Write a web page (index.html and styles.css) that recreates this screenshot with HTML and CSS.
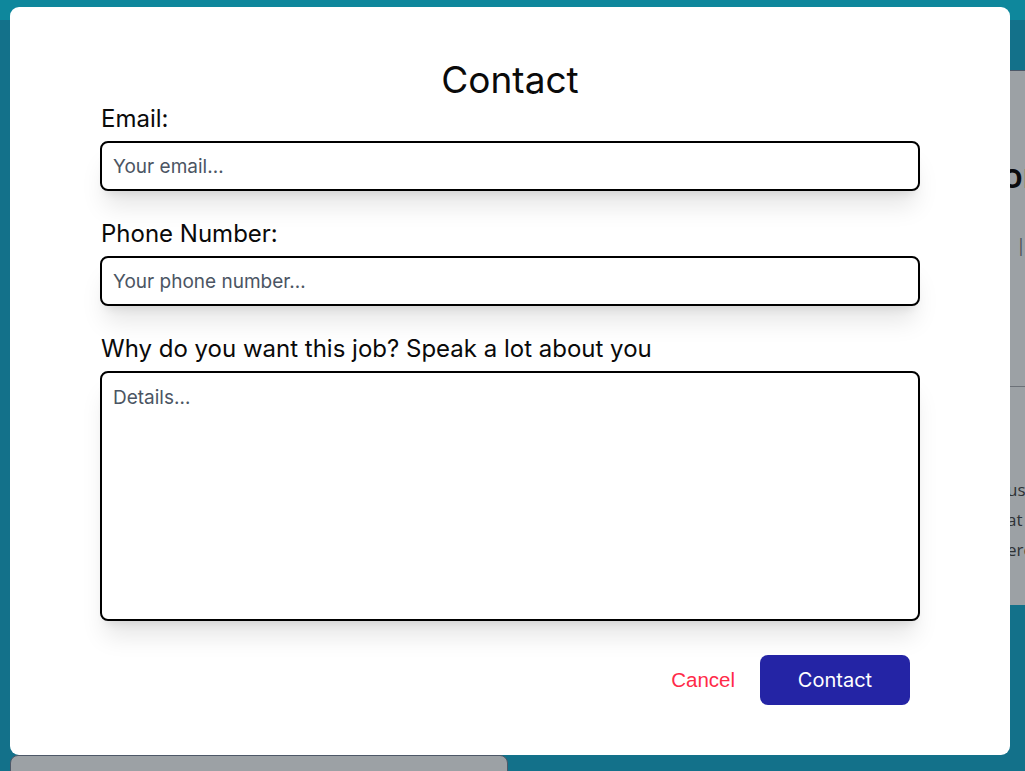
FILE: index.html
```html
<!DOCTYPE html>
<html lang="en">
<head>
<meta charset="utf-8">
<title>Contact</title>
<link rel="stylesheet" href="styles.css">
</head>
<body>
<div class="page">
  <div class="topbar"></div>
  <div class="row-right">
    <div class="job-card">
      <div class="job-title">OR</div>
      <div class="job-meta">|</div>
      <hr class="job-rule">
      <div class="job-text">
        <p>us</p>
        <p>at</p>
        <p>erc</p>
      </div>
    </div>
  </div>
  <div class="row-left">
    <div class="small-card"></div>
  </div>
</div>

<div class="overlay">
  <form class="modal">
    <h1 class="modal-title">Contact</h1>
    <div class="form-body">
      <label class="field-label" for="email">Email:</label>
      <input class="field-input" id="email" type="text" placeholder="Your email…">

      <label class="field-label" for="phone">Phone Number:</label>
      <input class="field-input" id="phone" type="text" placeholder="Your phone number…">

      <label class="field-label" for="details">Why do you want this job? Speak a lot about you</label>
      <textarea class="field-input field-area" id="details" placeholder="Details…"></textarea>

      <div class="actions">
        <button type="button" class="btn-cancel">Cancel</button>
        <button type="button" class="btn-primary">Contact</button>
      </div>
    </div>
  </form>
</div>
</body>
</html>
```

FILE: styles.css
```css
* { box-sizing: border-box; }

html, body {
  margin: 0;
  padding: 0;
  height: 100%;
  overflow: hidden;
}

body {
  background: #13718a;
  font-family: Inter, "Noto Sans", sans-serif;
}

/* background page */
.page {
  display: flex;
  flex-direction: column;
  width: 1025px;
}

.topbar {
  height: 20px;
  background: #0e879c;
}

.row-right {
  display: flex;
  padding-top: 50px;
  padding-left: 1010px;
}

.job-card {
  width: 400px;
  height: 535px;
  background: #9ca1a5;
  border-top: 1px solid #4d5868;
  overflow: hidden;
  font-family: "Open Sans", "Noto Sans", sans-serif;
}

.job-title {
  margin-top: 92px;
  margin-left: -8px;
  font-size: 26px;
  font-weight: 700;
  color: #0b0c0e;
  line-height: 30px;
}

.job-meta {
  margin-top: 40px;
  margin-left: 6px;
  font-size: 18px;
  color: #4a4f55;
  line-height: 24px;
}

.job-rule {
  margin: 129px 0 0 0;
  border: 0;
  border-top: 1px solid #6c7178;
}

.job-text {
  margin-top: 88px;
  font-size: 17px;
  color: #2e3236;
  line-height: 30px;
}

.job-text p {
  margin: 0;
  margin-left: -3px;
}

.row-left {
  display: flex;
  padding-top: 150px;
  padding-left: 10px;
}

.small-card {
  width: 498px;
  height: 40px;
  background: #9ca1a5;
  border: 1px solid #4d5868;
  border-radius: 8px;
}

/* modal */
.overlay {
  position: fixed;
  inset: 0;
  display: flex;
  justify-content: flex-start;
  align-items: flex-start;
  padding-top: 7px;
  padding-left: 10px;
}

.modal {
  width: 1000px;
  height: 748px;
  background: #ffffff;
  border-radius: 9px;
  padding: 53px 90px 0;
  display: flex;
  flex-direction: column;
}

.modal-title {
  margin: 0;
  text-align: center;
  font-size: 37px;
  line-height: 40px;
  font-weight: 400;
  color: #0a0a0a;
}

.form-body {
  display: flex;
  flex-direction: column;
}

.field-label {
  font-size: 24px;
  line-height: 28px;
  color: #0a0a0a;
  margin-top: 29px;
  margin-bottom: 8px;
  padding-left: 1px;
}

.field-label:first-child {
  margin-top: 5px;
}

.field-input {
  width: 820px;
  height: 50px;
  border: 2px solid #000;
  border-radius: 8px;
  padding: 0 11px;
  font-family: inherit;
  font-size: 19px;
  color: #111;
  background: #fff;
  outline: none;
  box-shadow: 0 20px 25px -5px rgba(0, 0, 0, 0.1), 0 8px 10px -6px rgba(0, 0, 0, 0.1);
}

.field-input::placeholder {
  color: #4b5563;
  opacity: 1;
}

.field-area {
  height: 250px;
  padding: 13px 11px;
  resize: none;
  line-height: 24px;
}

.actions {
  display: flex;
  justify-content: flex-end;
  align-items: center;
  gap: 25px;
  margin-top: 34px;
  padding-right: 10px;
}

.btn-cancel {
  border: 0;
  background: none;
  font-family: "Liberation Sans", Arial, sans-serif;
  font-size: 20.5px;
  color: #ff2a48;
  padding: 0;
  cursor: pointer;
}

.btn-primary {
  width: 150px;
  height: 50px;
  border: 0;
  border-radius: 8px;
  background: #2424a5;
  color: #fff;
  font-family: Inter, "Noto Sans", sans-serif;
  font-size: 20px;
  cursor: pointer;
}
```
